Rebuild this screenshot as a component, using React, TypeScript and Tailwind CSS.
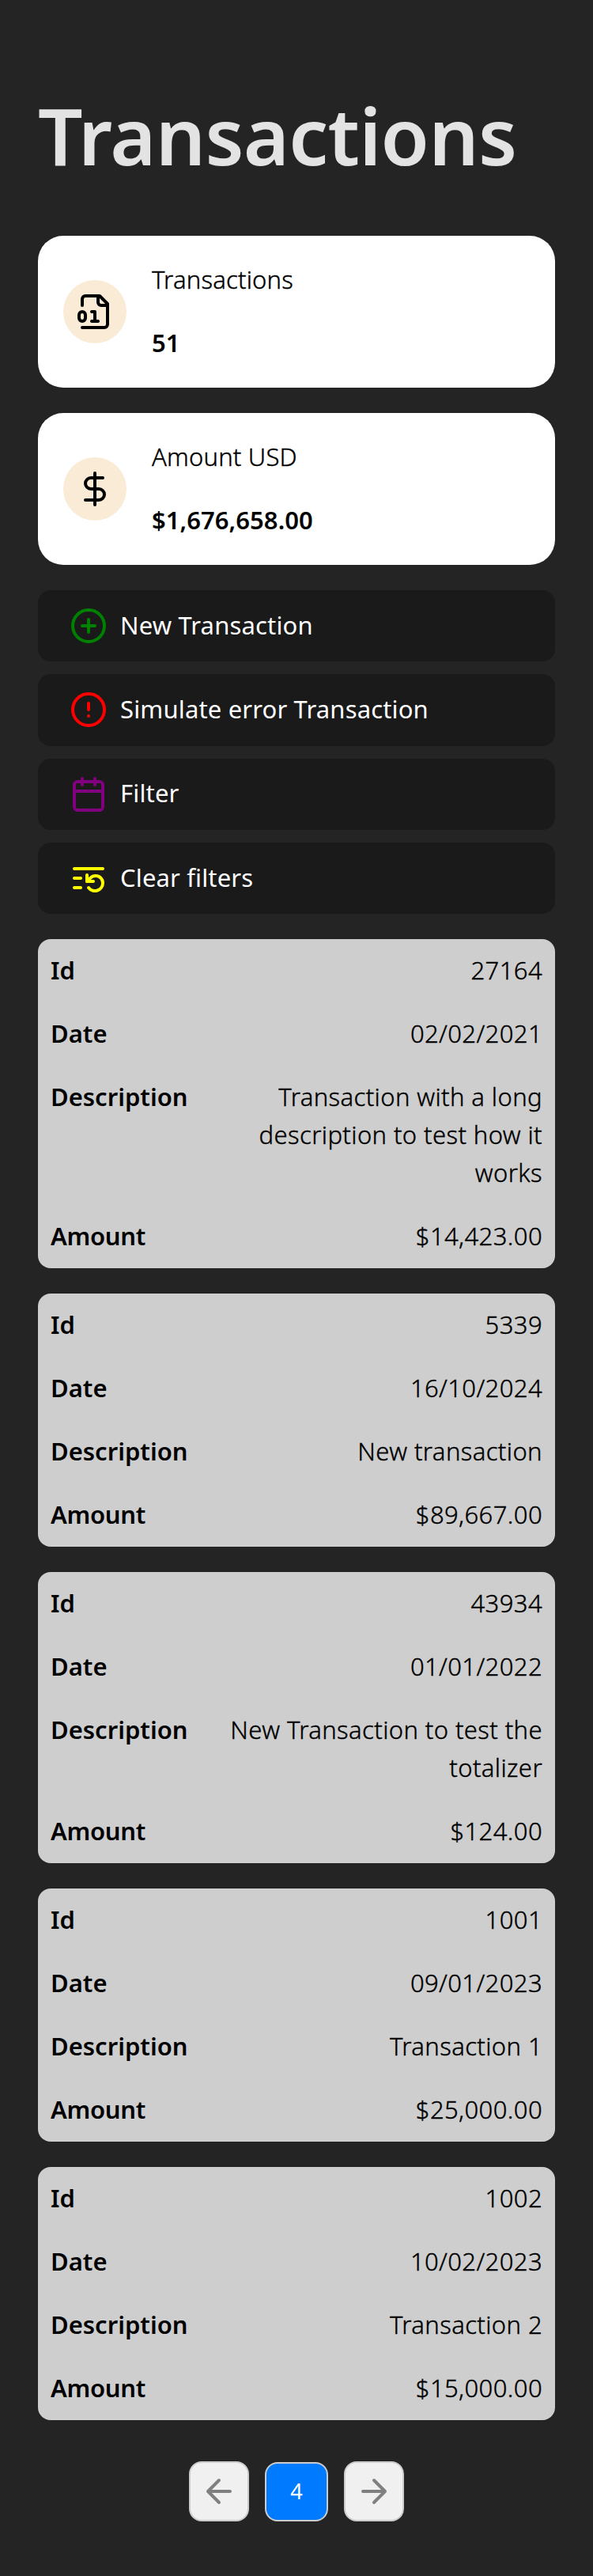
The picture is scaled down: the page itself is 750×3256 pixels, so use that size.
import React from "react";

const stroke = {
  viewBox: "0 0 24 24",
  fill: "none",
  stroke: "currentColor",
  strokeWidth: 2,
  strokeLinecap: "round" as const,
  strokeLinejoin: "round" as const,
};

function Icon({ className = "", children }: { className?: string; children: React.ReactNode }) {
  return (
    <svg {...stroke} className={`size-12 shrink-0 ${className}`}>
      {children}
    </svg>
  );
}

function Summary({ icon, label, value }: { icon: React.ReactNode; label: string; value: string }) {
  return (
    <section className="flex h-48 items-center gap-8 rounded-4xl bg-white px-8 text-black">
      <div className="flex size-20 items-center justify-center rounded-full bg-[#faebd7]">{icon}</div>
      <div className="flex flex-col gap-8 pb-0.5 leading-12">
        <p className="font-light tracking-[0.2px] [-webkit-text-stroke:0.4px_black]">{label}</p>
        <p className="font-semibold tracking-[0.05px]">{value}</p>
      </div>
    </section>
  );
}

function Action({ icon, label }: { icon: React.ReactNode; label: string }) {
  return (
    <button className="flex h-[90.3px] w-full items-center gap-4 rounded-2xl bg-[#1a1a1a] px-10 text-left font-normal text-white">
      {icon}
      <span className="pb-0.5 tracking-[0.15px]">{label}</span>
    </button>
  );
}

const rows = [
  { id: "27164", date: "02/02/2021", description: ["Transaction with a long", "description to test how it", "works"], amount: "$14,423.00" },
  { id: "5339", date: "16/10/2024", description: ["New transaction"], amount: "$89,667.00" },
  { id: "43934", date: "01/01/2022", description: ["New Transaction to test the", "totalizer"], amount: "$124.00" },
  { id: "1001", date: "09/01/2023", description: ["Transaction 1"], amount: "$25,000.00" },
  { id: "1002", date: "10/02/2023", description: ["Transaction 2"], amount: "$15,000.00" },
];

function Row({ label, lines }: { label: string; lines: string[] }) {
  return (
    <div className="flex justify-between pt-[15px] pb-[17px] leading-12">
      <dt className={label === "Amount" ? "font-semibold tracking-[-0.3px]" : "font-semibold"}>{label}</dt>
      <dd className="text-right font-light tracking-[0.4px] [-webkit-text-stroke:0.4px_black]">
        {lines.map((line) => (
          <span key={line} className="block whitespace-nowrap">{line}</span>
        ))}
      </dd>
    </div>
  );
}

export default function App() {
  return (
    <main className="h-[3256px] w-full bg-[#242424] px-12 font-['Noto_Sans',sans-serif] text-[31px]">
      <h1 className="pt-[115px] text-[99.5px] leading-[112px] font-semibold tracking-[-0.75px] text-[#e3e3e3]">Transactions</h1>
      <div className="mt-[71px] flex flex-col gap-8">
        <Summary
          label="Transactions"
          value="51"
          icon={
            <Icon>
              <path d="M4 22h14a2 2 0 0 0 2-2V7l-5-5H6a2 2 0 0 0-2 2v4" />
              <path d="M14 2v4a2 2 0 0 0 2 2h4" />
              <rect width="4" height="6" x="2" y="12" rx="2" />
              <path d="M10 12h2v6" />
              <path d="M10 18h4" />
            </Icon>
          }
        />
        <Summary
          label="Amount USD"
          value="$1,676,658.00"
          icon={
            <Icon>
              <path d="M12 2v20" />
              <path d="M17 5H9.5a3.5 3.5 0 0 0 0 7h5a3.5 3.5 0 0 1 0 7H6" />
            </Icon>
          }
        />
      </div>
      <div className="mt-8 flex flex-col gap-4">
        <Action
          label="New Transaction"
          icon={
            <Icon className="text-[#008000]">
              <circle cx="12" cy="12" r="10" />
              <path d="M8 12h8M12 8v8" />
            </Icon>
          }
        />
        <Action
          label="Simulate error Transaction"
          icon={
            <Icon className="text-[#ff0000]">
              <circle cx="12" cy="12" r="10" />
              <path d="M12 8v4M12 16h.01" />
            </Icon>
          }
        />
        <Action
          label="Filter"
          icon={
            <Icon className="text-[#800080]">
              <path d="M8 2v4M16 2v4M3 10h18" />
              <rect width="18" height="18" x="3" y="4" rx="2" />
            </Icon>
          }
        />
        <Action
          label="Clear filters"
          icon={
            <Icon className="text-[#ffff00]">
              <path d="M21 6H3M7 12H3M7 18H3" />
              <path d="M12 18a5 5 0 0 0 9-3 4.5 4.5 0 0 0-4.5-4.5c-1.33 0-2.54.54-3.41 1.41L11 14" />
              <path d="M11 10v4h4" />
            </Icon>
          }
        />
      </div>
      <div className="mt-[31.8px] flex flex-col gap-8">
        {rows.map((row) => (
          <dl key={row.id} className="rounded-2xl bg-[#cecece] px-4 text-black">
            <Row label="Id" lines={[row.id]} />
            <Row label="Date" lines={[row.date]} />
            <Row label="Description" lines={row.description} />
            <Row label="Amount" lines={[row.amount]} />
          </dl>
        ))}
      </div>
      <nav className="mt-[52px] flex items-end justify-center gap-5">
        <button className="flex size-[76px] items-center justify-center rounded-2xl border-2 border-[#cccccc] bg-[#f0f0f0] text-[#808080]">
          <Icon>
            <path d="m12 19-7-7 7-7M19 12H5" />
          </Icon>
        </button>
        <span className="flex h-[75px] w-20 items-center justify-center rounded-2xl border-2 border-[#cccccc] bg-[#007bff] text-[27px] text-white">
          4
        </span>
        <button className="flex size-[76px] items-center justify-center rounded-2xl border-2 border-[#cccccc] bg-[#f0f0f0] text-[#808080]">
          <Icon>
            <path d="M5 12h14M12 5l7 7-7 7" />
          </Icon>
        </button>
      </nav>
    </main>
  );
}
